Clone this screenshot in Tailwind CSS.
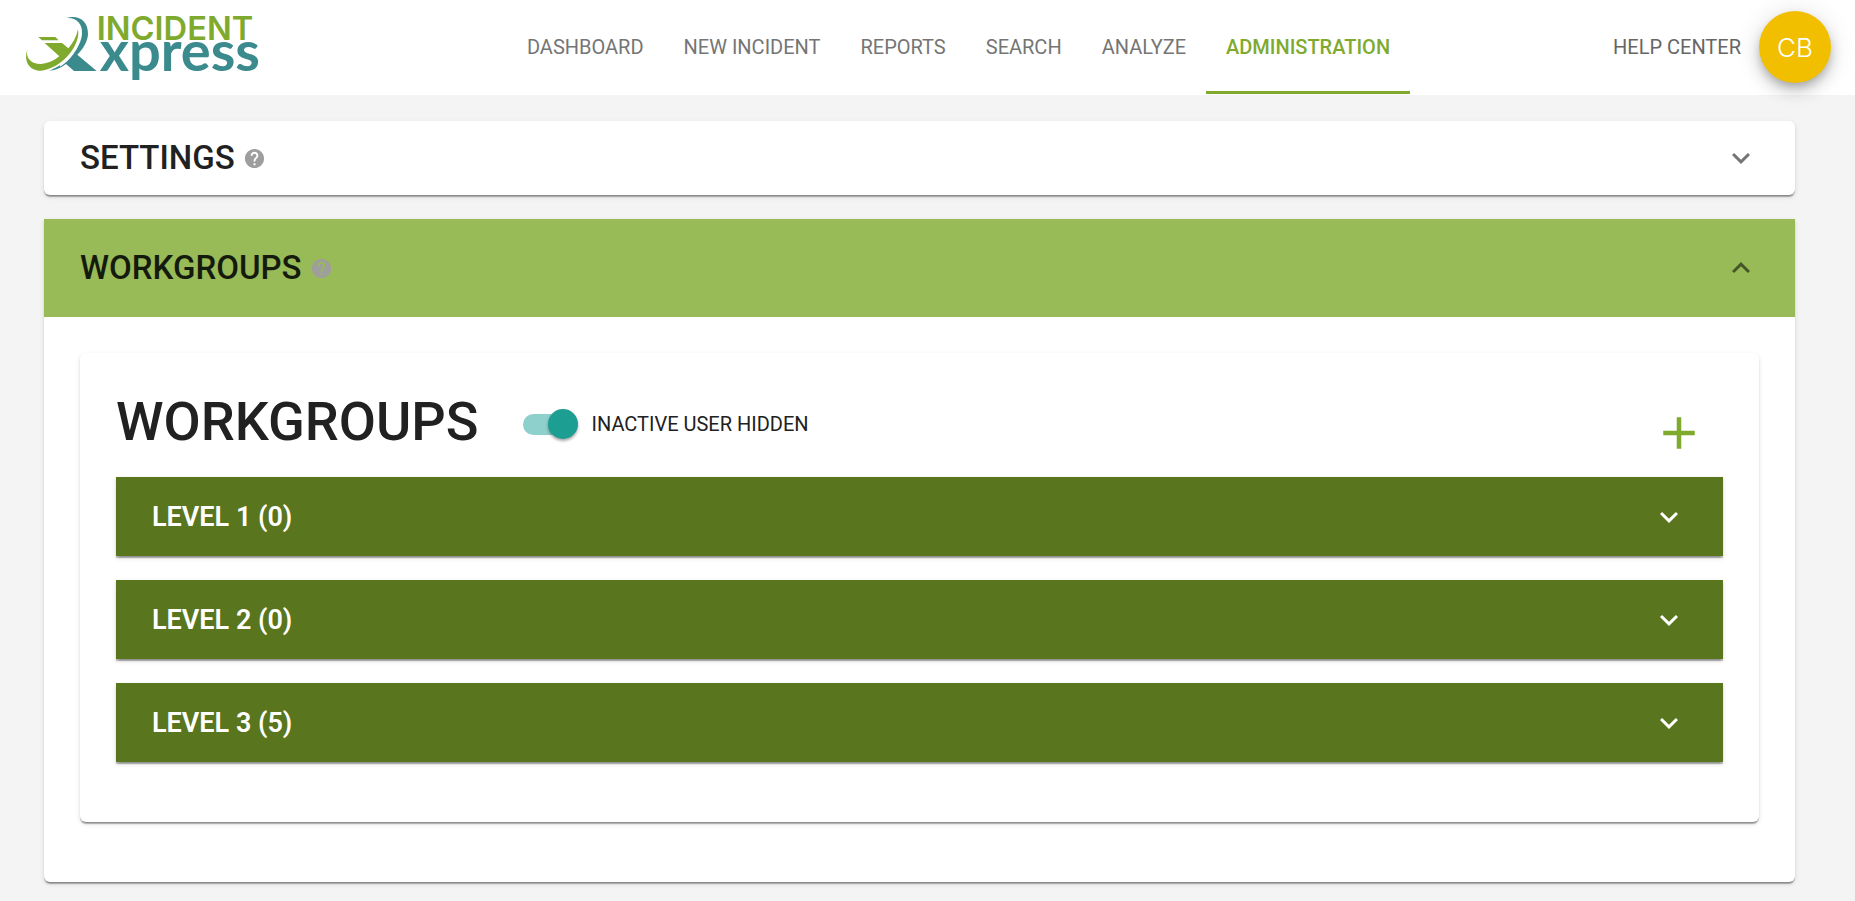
<!DOCTYPE html>
<html lang="en">

<head>
  <meta charset="UTF-8">
  <meta name="viewport" content="width=device-width, initial-scale=1.0">
  <title>Incident Xpress - Administration</title>
  <script src="https://cdn.jsdelivr.net/npm/@tailwindcss/browser@4"></script>
</head>

<body class="bg-[#f4f4f4] min-h-screen font-['Roboto',sans-serif] text-[#212121]">
  <header class="bg-white h-[95px] px-6 pb-px flex items-center justify-between">
    <a href="#" class="w-[280px]" aria-label="Incident Xpress">
      <svg class="w-60 h-[70px] overflow-visible" viewBox="72 33 720 210">
        <g fill="#3b8a8e">
          <path d="M199 51 C236 40 265 60 264 99 C263 120 251 142 232 161 L290 210 L222 210 L198 189 C184 200 168 208 149 209 C196 190 245 143 246 96 C247 68 230 49 199 51Z" />
          <text x="299" y="210" font-family="Lato, sans-serif" font-weight="700" font-size="168">xpress</text>
        </g>
        <path d="M236 112 C236 142 206 178 180 194" fill="none" stroke="#fff" stroke-width="5" />
        <g fill="#80aa2d">
          <path d="M82 146 C76 172 95 190 124 189 C144 187 162 179 178 166 L134 126 L186 126 L205 142 C219 126 230 106 234 85 C243 132 186 203 124 209 C88 210 70 180 82 146Z" />
          <path d="M115 108 L166 108 L176 118 L126 118Z" />
          <text x="290" y="118" font-family="Inter, sans-serif" font-weight="600" font-size="98">INCIDENT</text>
        </g>
      </svg>
    </a>

    <nav class="flex h-full text-xl text-[#757575]">
      <a href="#" class="flex items-center px-5">DASHBOARD</a>
      <a href="#" class="flex items-center px-5">NEW INCIDENT</a>
      <a href="#" class="flex items-center px-5">REPORTS</a>
      <a href="#" class="flex items-center px-5">SEARCH</a>
      <a href="#" class="flex items-center px-5">ANALYZE</a>
      <a href="#" class="flex items-center px-5 pt-[3px] border-b-3 border-[#80aa2d] font-medium text-[#80aa2d]">ADMINISTRATION</a>
    </nav>

    <div class="flex items-center gap-[18px]">
      <a href="#" class="text-xl text-[#666]">HELP CENTER</a>
      <button class="size-[72px] rounded-full bg-[#f1bf00] text-white text-[26px] font-light font-['Inter',sans-serif] shadow-[0_5px_8px_-2px_rgba(0,0,0,0.2),0_9px_15px_0_rgba(0,0,0,0.14),0_2px_27px_0_rgba(0,0,0,0.12)]">CB</button>
    </div>
  </header>

  <main class="pt-[26px] pl-11 pr-[60px] pb-[18px] flex flex-col gap-6">
    <!-- Settings (collapsed) -->
    <section class="bg-white rounded-md shadow-[0_3px_2px_-2px_rgba(0,0,0,0.3),0_2px_1px_0_rgba(0,0,0,0.2),0_2px_5px_0_rgba(0,0,0,0.12)]">
      <button class="w-full h-[74px] px-9 flex items-center justify-between" aria-expanded="false">
        <span class="flex items-center gap-2 text-[33px] font-medium">
          SETTINGS
          <svg class="size-[23px] fill-[#9e9e9e]" viewBox="0 0 24 24"><path d="M12 2C6.480 2 2 6.480 2 12s4.480 10 10 10 10-4.480 10-10S17.520 2 12 2zm1 17h-2v-2h2v2zm2.070-7.750l-.9.920C13.450 12.900 13 13.500 13 15h-2v-.5c0-1.100.450-2.100 1.170-2.830l1.240-1.260c.37-.36.59-.86.59-1.410 0-1.100-.9-2-2-2s-2 .9-2 2H8c0-2.210 1.790-4 4-4s4 1.790 4 4c0 .88-.36 1.680-.93 2.250z" /></svg>
        </span>
        <svg class="size-9 fill-[#757575]" viewBox="0 0 24 24"><path d="M16.590 8.590L12 13.170 7.410 8.590 6 10l6 6 6-6z" /></svg>
      </button>
    </section>

    <!-- Workgroups (expanded) -->
    <section class="bg-white rounded-b-md shadow-[0_3px_2px_-2px_rgba(0,0,0,0.3),0_2px_1px_0_rgba(0,0,0,0.2),0_2px_5px_0_rgba(0,0,0,0.12)]">
      <button class="w-full h-[98px] px-9 flex items-center justify-between bg-[#98ba57]" aria-expanded="true">
        <span class="flex items-center gap-2 text-[33px] font-medium text-[#141a0c]">
          WORKGROUPS
          <svg class="size-[23px] fill-[#9e9e9e]" viewBox="0 0 24 24"><path d="M12 2C6.480 2 2 6.480 2 12s4.480 10 10 10 10-4.480 10-10S17.520 2 12 2zm1 17h-2v-2h2v2zm2.070-7.750l-.9.920C13.450 12.900 13 13.500 13 15h-2v-.5c0-1.100.450-2.100 1.170-2.830l1.240-1.260c.37-.36.59-.86.59-1.410 0-1.100-.9-2-2-2s-2 .9-2 2H8c0-2.210 1.790-4 4-4s4 1.790 4 4c0 .88-.36 1.680-.93 2.250z" /></svg>
        </span>
        <svg class="size-9 fill-[#465629]" viewBox="0 0 24 24"><path d="M12 8l-6 6 1.410 1.410L12 10.830l4.590 4.580L18 14z" /></svg>
      </button>

      <div class="px-9 pt-9 pb-[60px]">
        <div class="rounded-md px-9 pt-9 pb-[60px] shadow-[0_3px_2px_-2px_rgba(0,0,0,0.3),0_2px_1px_0_rgba(0,0,0,0.2),0_2px_5px_0_rgba(0,0,0,0.12)]">
          <div class="h-[88px] pr-[17px] flex items-start justify-between">
            <div class="h-[70px] flex items-center gap-11">
              <h2 class="pb-1 text-[54px] leading-[62px] font-medium">WORKGROUPS</h2>
              <label class="flex items-center gap-[18px] text-xl">
                <input type="checkbox" checked class="appearance-none relative w-[51px] h-[21px] rounded-full bg-[#8ed0cb] before:absolute before:-top-[5px] before:left-[25px] before:size-[30px] before:rounded-full before:bg-[#1c9e92] before:shadow-[0_2px_3px_rgba(0,0,0,0.35)]">
                INACTIVE USER HIDDEN
              </label>
            </div>
            <button class="size-[54px] self-center" aria-label="Add workgroup">
              <svg class="size-[54px] fill-[#80aa2d]" viewBox="0 0 24 24"><path d="M19 13h-6v6h-2v-6H5v-2h6V5h2v6h6v2z" /></svg>
            </button>
          </div>

          <div class="flex flex-col gap-6">
            <button class="h-[79px] px-9 flex items-center justify-between bg-[#59751d] text-white text-[27px] font-semibold shadow-[0_3px_2px_-2px_rgba(0,0,0,0.3),0_2px_1px_0_rgba(0,0,0,0.2),0_2px_5px_0_rgba(0,0,0,0.12)]" aria-expanded="false">
              <span class="pt-0.5">LEVEL 1 (0)</span>
              <svg class="size-9 fill-white" viewBox="0 0 24 24"><path d="M16.590 8.590L12 13.170 7.410 8.590 6 10l6 6 6-6z" /></svg>
            </button>
            <button class="h-[79px] px-9 flex items-center justify-between bg-[#59751d] text-white text-[27px] font-semibold shadow-[0_3px_2px_-2px_rgba(0,0,0,0.3),0_2px_1px_0_rgba(0,0,0,0.2),0_2px_5px_0_rgba(0,0,0,0.12)]" aria-expanded="false">
              <span class="pt-0.5">LEVEL 2 (0)</span>
              <svg class="size-9 fill-white" viewBox="0 0 24 24"><path d="M16.590 8.590L12 13.170 7.410 8.590 6 10l6 6 6-6z" /></svg>
            </button>
            <button class="h-[79px] px-9 flex items-center justify-between bg-[#59751d] text-white text-[27px] font-semibold shadow-[0_3px_2px_-2px_rgba(0,0,0,0.3),0_2px_1px_0_rgba(0,0,0,0.2),0_2px_5px_0_rgba(0,0,0,0.12)]" aria-expanded="false">
              <span class="pt-0.5">LEVEL 3 (5)</span>
              <svg class="size-9 fill-white" viewBox="0 0 24 24"><path d="M16.590 8.590L12 13.170 7.410 8.590 6 10l6 6 6-6z" /></svg>
            </button>
          </div>
        </div>
      </div>
    </section>
  </main>
</body>

</html>
